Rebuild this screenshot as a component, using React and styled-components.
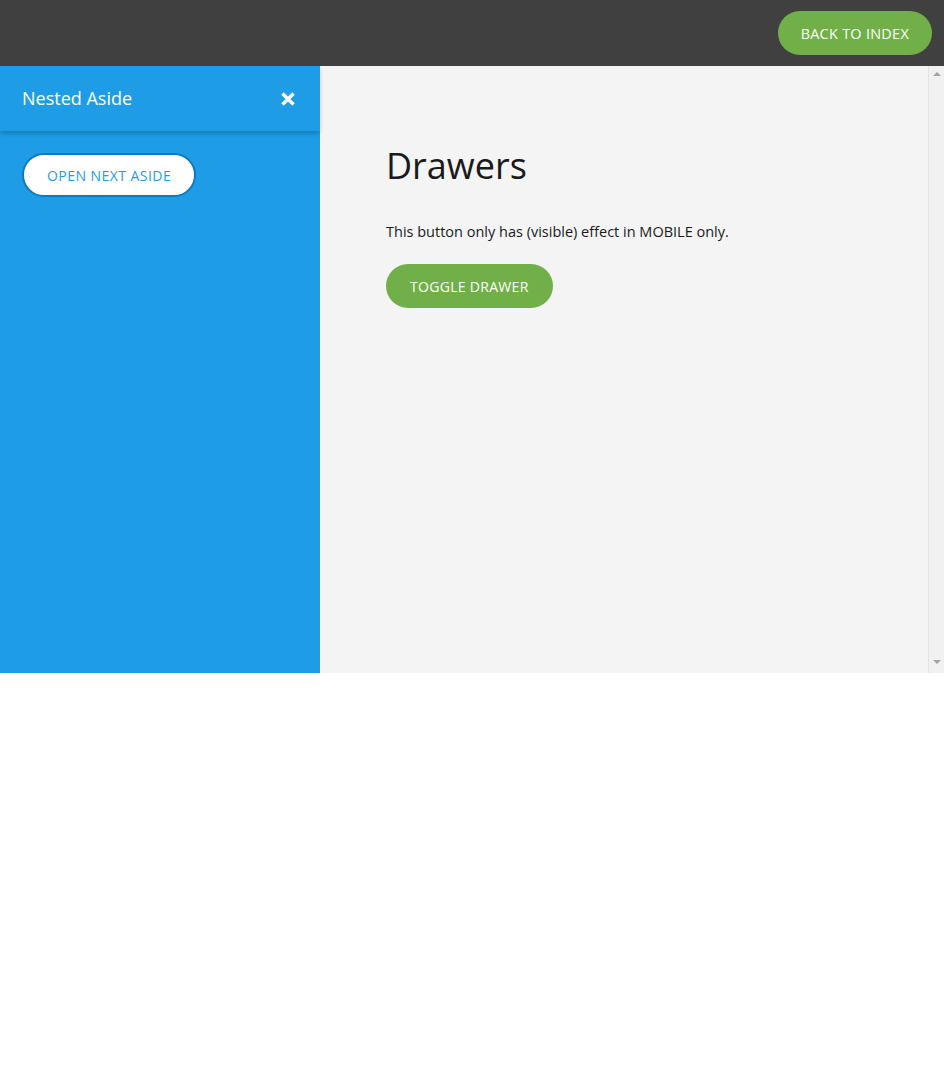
import React from 'react';
import styled, { createGlobalStyle } from 'styled-components';

const GlobalStyle = createGlobalStyle`
  html, body {
    margin: 0;
    padding: 0;
    background: #ffffff;
    font-family: "Open Sans", "Noto Sans", sans-serif;
  }
`;

const TopBar = styled.header`
  height: 66px;
  background: #404040;
  display: flex;
  align-items: center;
  justify-content: flex-end;
  padding: 0 12px;
  box-sizing: border-box;
`;

const PillButton = styled.button`
  height: 44px;
  padding: 0 ${(p) => p.pad || 24}px;
  border-radius: 22px;
  border: ${(p) => (p.outline ? '2px solid #0c7ac0' : 'none')};
  background: ${(p) => (p.outline ? '#ffffff' : '#71b048')};
  color: ${(p) => (p.outline ? '#1e9de6' : '#ffffff')};
  font-family: "Open Sans", sans-serif;
  font-size: ${(p) => p.size || 14}px;
  letter-spacing: ${(p) => (p.outline ? '0.45px' : '0.3px')};
  text-transform: uppercase;
  cursor: pointer;
  box-sizing: border-box;
`;

const Body = styled.div`
  display: flex;
  height: 607px;
`;

const Aside = styled.aside`
  width: 320px;
  flex: none;
  background: #1e9de6;
  color: #ffffff;
  display: flex;
  flex-direction: column;
`;

const AsideHeader = styled.div`
  height: 65px;
  display: flex;
  align-items: center;
  justify-content: space-between;
  padding: 0 22px;
  box-sizing: border-box;
  box-shadow: 0 3px 4px rgba(0, 0, 0, 0.18);
  position: relative;
  z-index: 1;
`;

const AsideTitle = styled.h2`
  margin: -2px 0 0;
  font-weight: 400;
  font-size: 18px;
  color: #ffffff;
`;

const CloseButton = styled.button`
  border: none;
  background: none;
  padding: 0;
  width: 20px;
  height: 20px;
  display: flex;
  align-items: center;
  justify-content: center;
  cursor: pointer;
`;

const AsideContent = styled.div`
  padding: 22px 22px;
`;

const Main = styled.main`
  flex: 1;
  background: #f4f4f4;
  padding: 0 66px;
`;

const ScrollRail = styled.div`
  width: 15px;
  flex: none;
  background: #f1f1f1;
  border-left: 1px solid #e4e4e4;
  display: flex;
  flex-direction: column;
  justify-content: space-between;
  align-items: center;
  padding: 6px 0 9px;
  box-sizing: content-box;
`;

const Arrow = styled.span`
  width: 0;
  height: 0;
  border-left: 4px solid transparent;
  border-right: 4px solid transparent;
  ${(p) => (p.down ? 'border-top: 4px solid #a3a3a3;' : 'border-bottom: 4px solid #a3a3a3;')}
`;

const Title = styled.h1`
  margin: 76px 0 0;
  font-weight: 400;
  font-size: 36px;
  line-height: 48px;
  color: #1a1a1a;
`;

const Text = styled.p`
  margin: 32px 0 22px;
  font-size: 14.5px;
  line-height: 20px;
  color: #1a1a1a;
`;

export default function App() {
  return (
    <>
      <GlobalStyle />
      <TopBar>
        <PillButton pad={23} size={14.4}>Back to index</PillButton>
      </TopBar>
      <Body>
        <Aside>
          <AsideHeader>
            <AsideTitle>Nested Aside</AsideTitle>
            <CloseButton aria-label="close">
              <svg width="16" height="16" viewBox="0 0 16 16">
                <path d="M2.5 2.5 L13.5 13.5 M13.5 2.5 L2.5 13.5" stroke="#fff" strokeWidth="3.4" strokeLinecap="butt" />
              </svg>
            </CloseButton>
          </AsideHeader>
          <AsideContent>
            <PillButton outline pad={23}>Open next aside</PillButton>
          </AsideContent>
        </Aside>
        <Main>
          <Title>Drawers</Title>
          <Text>This button only has (visible) effect in MOBILE only.</Text>
          <PillButton pad={24}>Toggle drawer</PillButton>
        </Main>
        <ScrollRail aria-hidden="true">
          <Arrow />
          <Arrow down />
        </ScrollRail>
      </Body>
    </>
  );
}
